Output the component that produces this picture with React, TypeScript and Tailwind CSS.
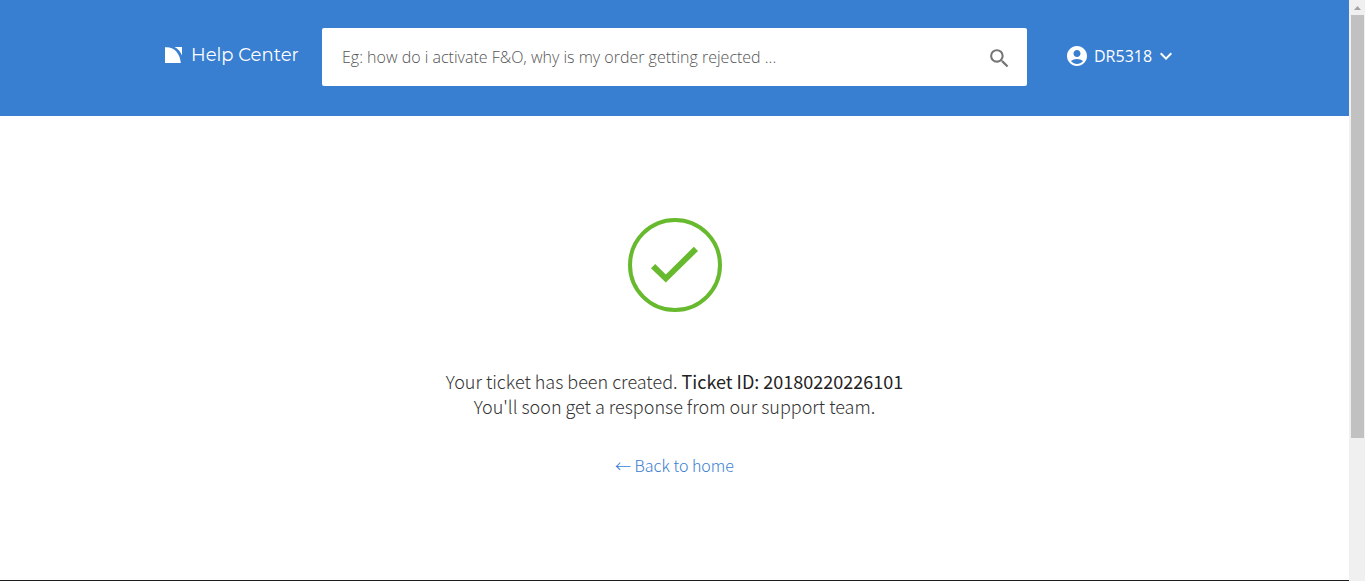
import {MdAccountCircle, MdKeyboardArrowDown, MdSearch} from 'react-icons/md';

interface TicketMessageProps {
  ticketId: string;
}

function Logo() {
  return (
    <a href="#home" className="flex w-[157px] shrink-0 items-center gap-2 pb-1 text-white">
      <svg width="18" height="18" viewBox="0 0 18 18" fill="currentColor" aria-hidden="true">
        <path d="M0 1.3C7.5 0.2 15 6 15.8 17H0z" />
        <path d="M9.5 1H17v8.6C15.7 5.9 13 2.7 9.5 1z" />
      </svg>
      <span className="whitespace-nowrap font-['Montserrat','Lato',sans-serif] text-[18px] leading-6">Help Center</span>
    </a>
  );
}

function SearchBox() {
  return (
    <form className="flex h-[58px] min-w-0 flex-1 items-center rounded-[2px] bg-white pr-[15px] pl-5" role="search">
      <input
        type="text"
        aria-label="Search"
        placeholder="Eg: how do i activate F&O, why is my order getting rejected ..."
        className="h-full min-w-0 flex-1 font-['Open_Sans',sans-serif] text-[16px] font-light text-[#444] outline-none placeholder:text-[#555]"
      />
      <button type="button" aria-label="Search" className="text-[#757575]">
        <MdSearch size={25} className="mt-0.5" />
      </button>
    </form>
  );
}

function AccountMenu() {
  return (
    <button type="button" className="flex w-[157px] shrink-0 items-center pb-0.5 pl-[38px] text-white">
      <MdAccountCircle size={24} />
      <span className="mr-0.5 ml-[5px] font-['Open_Sans',sans-serif] text-[16px] leading-6">DR5318</span>
      <MdKeyboardArrowDown size={24} />
    </button>
  );
}

function TicketMessage({ticketId}: Readonly<TicketMessageProps>) {
  return (
    <main className="flex flex-1 flex-col items-center pt-[102px] text-center font-['Noto_Sans_CJK_SC',sans-serif]">
      <svg width="94" height="94" viewBox="0 0 94 94" fill="none" className="shrink-0" aria-hidden="true">
        <circle cx="47" cy="47" r="45" stroke="#67b92e" strokeWidth="4" />
        <path d="M27.2 46L23 50.2L37.8 64.6L70 33L65.8 28.8L37.8 56.4z" fill="#67b92e" />
      </svg>
      <p className="mt-[57px] text-[18px] leading-[25px] font-light text-[#333]">
        Your ticket has been created. <strong className="font-normal text-[#222]">Ticket ID: {ticketId}</strong>
        <br />
        You'll soon get a response from our support team.
      </p>
      <a href="#home" className="mt-[34px] text-[16px] leading-6 font-light text-[#387ed1]">
        ← Back to home
      </a>
    </main>
  );
}

function Scrollbar() {
  return (
    <div className="flex w-4 shrink-0 flex-col bg-[#f0f0f0] pr-px pl-0.5" aria-hidden="true">
      <div className="flex h-[15px] items-center justify-center">
        <svg width="7" height="4" viewBox="0 0 7 4" fill="#a3a3a3">
          <path d="M3.5 0L7 4H0z" />
        </svg>
      </div>
      <div className="h-[423px] bg-[#c1c1c1]"></div>
    </div>
  );
}

function App() {
  return (
    <div className="flex h-screen bg-white">
      <div className="flex min-w-0 flex-1 flex-col">
        <header className="bg-[#387ed1] pt-7 pb-[30px]">
          <div className="mx-auto flex max-w-[1019px] items-center">
            <Logo />
            <SearchBox />
            <AccountMenu />
          </div>
        </header>
        <TicketMessage ticketId="20180220226101" />
        <footer className="h-px bg-[#1d1d1d]"></footer>
      </div>
      <Scrollbar />
    </div>
  );
}

export default App;
